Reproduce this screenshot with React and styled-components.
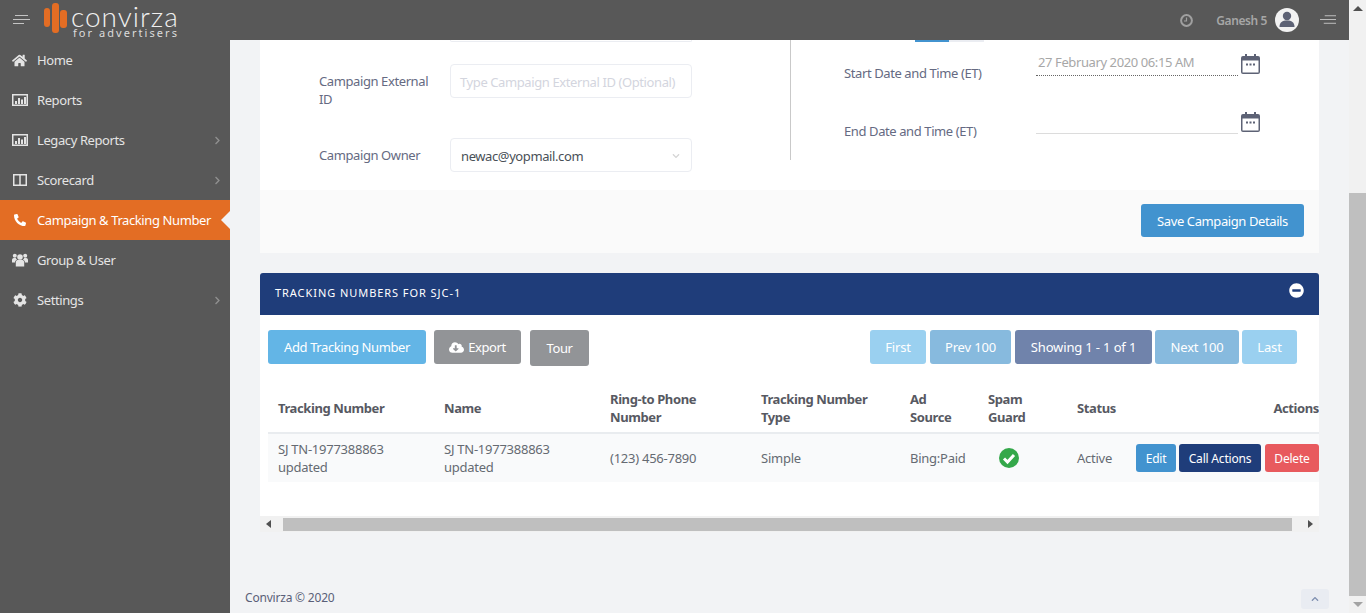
import React from 'react';
import styled, { createGlobalStyle } from 'styled-components';
import {
  FaHome, FaPhoneAlt, FaCog, FaChevronRight, FaChevronUp, FaChevronDown,
  FaCloudDownloadAlt, FaMinusCircle,
} from 'react-icons/fa';

const GlobalStyle = createGlobalStyle`
  html, body, #root { margin: 0; height: 100%; overflow: hidden; }
  body { font-family: "Noto Sans", "Open Sans", sans-serif; font-size: 13px; letter-spacing: -0.4px; color: #575962; }
  * { box-sizing: border-box; }
`;

const Page = styled.div`
  display: flex;
  height: 613px;
  width: 1366px;
  background: #f2f3f5;
`;

const Viewport = styled.div`
  display: flex;
  flex-direction: column;
  width: 1349px;
`;

const Header = styled.header`
  display: flex;
  align-items: center;
  height: 40px;
  flex: none;
  background: #585858;
  padding: 0 13px;
  color: #a9a9a9;
`;

const Burger = styled.svg`
  width: 17px;
  height: 10px;
  flex: none;
  display: block;
`;

const Logo = styled.div`
  display: flex;
  align-items: flex-start;
  margin-left: 14px;
  height: 40px;
`;

const LogoMark = styled.svg`
  width: 23px;
  height: 30px;
  margin-top: 3px;
  flex: none;
`;

const LogoWords = styled.div`
  margin-left: 4px;
  display: flex;
  flex-direction: column;
  color: #f0f0f0;
`;

const LogoName = styled.span`
  font-family: "Lato", sans-serif;
  font-weight: 300;
  font-size: 28px;
  line-height: 20px;
  margin-top: 6px;
  letter-spacing: 1px;
`;

const LogoTag = styled.span`
  font-family: "Noto Sans", sans-serif;
  font-size: 11px;
  line-height: 10px;
  letter-spacing: 2.05px;
  margin: 2px 0 0 2px;
  color: #dcdcdc;
`;

const HeaderRight = styled.div`
  margin-left: auto;
  display: flex;
  align-items: center;
`;

const ClockIcon = styled.svg`
  width: 13px;
  height: 13px;
  display: block;
`;

const UserName = styled.span`
  font-size: 12px;
  font-weight: 600;
  margin-left: 23px;
  color: #a6a6a6;
`;

const Avatar = styled.svg`
  width: 24px;
  height: 24px;
  margin-left: 8px;
`;

const RightBurger = styled(Burger)`
  margin-left: 21px;
  width: 16px;
`;

const Body = styled.div`
  flex: 1;
  display: flex;
  min-height: 0;
`;

const Sidebar = styled.nav`
  width: 230px;
  flex: none;
  background: #585858;
`;

const NavItem = styled.a`
  position: relative;
  display: flex;
  align-items: center;
  height: 40px;
  padding: 0 8px 0 12px;
  color: ${({ $active }) => ($active ? '#ffffff' : '#e4e4e4')};
  background: ${({ $active }) => ($active ? '#e36d24' : 'transparent')};
  font-size: 13px;

  ${({ $active }) => $active && `
    &::after {
      content: '';
      position: absolute;
      right: 0;
      top: 50%;
      margin-top: -9px;
      border-style: solid;
      border-width: 9px 9px 9px 0;
      border-color: transparent #f2f3f5 transparent transparent;
    }
  `}
`;

const NavIcon = styled.span`
  width: 25px;
  flex: none;
  display: flex;
  align-items: center;
  font-size: 15px;
`;

const NavSvg = styled.svg`
  width: 16px;
  height: 14px;
  display: block;
`;

const NavArrow = styled(FaChevronRight)`
  margin-left: auto;
  font-size: 9px;
  color: #8f8f8f;
`;

const Main = styled.main`
  flex: 1;
  display: flex;
  flex-direction: column;
  padding: 0 30px 0 30px;
  min-width: 0;
`;

const Card = styled.section`
  background: #fff;
  flex: none;
`;

const FormArea = styled.div`
  display: flex;
  height: 150px;
`;

const FormLeft = styled.div`
  width: 531px;
  flex: none;
  height: 120px;
  border-right: 1px solid #c9c9c9;
  padding-left: 59px;
`;

const Stub = styled.div`
  width: 242px;
  height: 2px;
  margin-left: 131px;
  border: 1px solid #ebedf2;
  border-top: 0;
  border-radius: 0 0 4px 4px;
`;

const FieldRow = styled.div`
  display: grid;
  grid-template-columns: 131px 242px;
  align-items: start;
  margin-top: ${({ $gap }) => $gap}px;
`;

const FieldLabel = styled.label`
  font-size: 13px;
  line-height: 18px;
  color: #656a82;
  padding: 8px 16px 0 0;
`;

const TextBox = styled.div`
  height: 34px;
  border: 1px solid #ebedf2;
  border-radius: 4px;
  display: flex;
  align-items: center;
  justify-content: space-between;
  padding: 2px 10px 0 ${({ $muted }) => ($muted ? 9 : 10)}px;
  font-size: 13px;
  color: ${({ $muted }) => ($muted ? '#d3d5de' : '#495057')};
  white-space: nowrap;
`;

const SelectCaret = styled(FaChevronDown)`
  font-size: 8px;
  color: #d5d5d5;
  margin-right: 1px;
`;

const FormRight = styled.div`
  flex: 1;
  padding-left: 53px;
`;

const ToggleStub = styled.div`
  display: flex;
  margin-left: 71px;
  height: 2px;
`;

const ToggleBit = styled.div`
  width: ${({ $w }) => $w}px;
  background: ${({ $on }) => ($on ? '#4293cf' : '#ebedf2')};
`;

const DateRow = styled.div`
  display: grid;
  grid-template-columns: 192px 202px 21px;
  align-items: start;
  margin-top: ${({ $gap }) => $gap}px;
`;

const DateLabel = styled(FieldLabel)`
  padding: 14px 0 0;
  white-space: nowrap;
`;

const DateValue = styled.div`
  height: 26px;
  padding: 3px 2px 0;
  font-size: 13px;
  line-height: 18px;
  color: #a7a7a7;
  border-bottom: 1px ${({ $dotted }) => ($dotted ? 'dotted #666' : 'solid #dcdcdc')};
  white-space: nowrap;
`;

const CalendarIcon = styled.svg`
  width: 19px;
  height: 20px;
  margin: 4px 0 0 3px;
`;

const CardFooter = styled.div`
  display: flex;
  justify-content: flex-end;
  align-items: center;
  height: 63px;
  padding: 0 15px 2px 0;
  background: #fafafa;
`;

const Button = styled.button`
  height: ${({ $h }) => $h || 34}px;
  width: ${({ $w }) => $w}px;
  margin-left: ${({ $ml }) => $ml || 0}px;
  flex: none;
  display: inline-flex;
  align-items: center;
  justify-content: center;
  gap: 4px;
  padding: 0;
  border: 0;
  border-radius: 3px;
  background: ${({ $bg }) => $bg};
  color: #fff;
  font-family: inherit;
  letter-spacing: inherit;
  font-size: ${({ $small }) => ($small ? 12 : 13)}px;
  white-space: nowrap;
`;

const PanelHead = styled.div`
  margin-top: 20px;
  flex: none;
  height: 42px;
  display: flex;
  align-items: center;
  justify-content: space-between;
  padding: 0 15px 4px;
  background: #1f3d7a;
  color: #fff;
  border-radius: 3px 3px 0 0;
  font-size: 11px;
  letter-spacing: 0.94px;
`;

const CollapseIcon = styled(FaMinusCircle)`
  font-size: 15px;
  margin-bottom: 4px;
`;

const PanelBody = styled.div`
  height: 201px;
  flex: none;
  background: #fff;
  padding: 15px 0 0 8px;
  overflow: hidden;
`;

const Toolbar = styled.div`
  display: flex;
  align-items: flex-start;
  height: 36px;
  gap: 8px;
  padding-right: 22px;
`;

const Pager = styled.div`
  margin-left: auto;
  display: flex;
  gap: 3px;
  letter-spacing: -0.15px;
`;

const Table = styled.div`
  margin-top: 19px;
  width: 1051px;
`;

const Row = styled.div`
  display: grid;
  grid-template-columns: 166px 166px 151px 149px 78px 89px 59px 193px;
  align-items: center;
  height: ${({ $h }) => $h}px;
  background: ${({ $head }) => ($head ? '#fff' : '#f9fafb')};
  border-bottom: ${({ $head }) => ($head ? '2px solid #e9ecef' : '0')};
  padding-bottom: ${({ $head }) => ($head ? 2 : 0)}px;
`;

const HeadCell = styled.div`
  padding: 0 ${({ $pr }) => $pr || 0}px 0 10px;
  font-weight: 700;
  line-height: 18px;
  color: #575962;
  ${({ $narrow }) => $narrow && 'width: min-content;'}
  ${({ $right }) => $right && 'padding: 0; margin-left: -10px; text-align: right;'}
`;

const Cell = styled.div`
  padding-left: 10px;
  line-height: 18px;
  letter-spacing: -0.25px;
  color: #656a72;
`;

const Actions = styled.div`
  display: flex;
  gap: 3px;
  padding-left: 10px;
  letter-spacing: -0.2px;
`;

const CheckIcon = styled.svg`
  width: 20px;
  height: 20px;
  display: block;
  margin-left: 21px;
`;

const HScroll = styled.div`
  flex: none;
  height: 16px;
  display: flex;
  align-items: center;
  background: #f1f1f1;
`;

const ArrowBox = styled.div`
  width: ${({ $w }) => $w}px;
  padding: ${({ $pad }) => $pad};
  display: flex;
  justify-content: center;
  flex: none;
`;

const Arrow = styled.span`
  width: 0;
  height: 0;
  border-style: solid;
  border-color: transparent;
  ${({ $dir }) => ({
    left: 'border-width: 4px 5px 4px 0; border-right-color: #505050;',
    right: 'border-width: 4px 0 4px 5px; border-left-color: #505050;',
    up: 'border-width: 0 5px 5px 5px; border-bottom-color: #505050;',
    down: 'border-width: 5px 5px 0 5px; border-top-color: #a3a3a3;',
  }[$dir])}
`;

const HThumb = styled.div`
  flex: 1;
  height: 13px;
  margin-top: 1px;
  background: #bfbfbf;
`;

const Footer = styled.footer`
  flex: 1;
  display: flex;
  align-items: flex-end;
  justify-content: space-between;
  margin: 0 0 0 -15px;
  padding-bottom: 7px;
  font-size: 12px;
  letter-spacing: -0.2px;
  color: #5a5f78;
`;

const TopButton = styled.div`
  width: 28px;
  height: 20px;
  margin: 0 -10px -3px 0;
  background: #e9ecf2;
  border-radius: 3px;
  display: flex;
  align-items: center;
  justify-content: center;
  color: #7e8fb0;
  font-size: 8px;
`;

const VScroll = styled.div`
  width: 17px;
  flex: none;
  display: flex;
  flex-direction: column;
  background: #f1f1f1;
`;

const VArrow = styled.div`
  height: 17px;
  flex: none;
  display: flex;
  align-items: center;
  justify-content: center;
`;

const VTrack = styled.div`
  flex: 1;
  display: flex;
  flex-direction: column;
  padding-top: 176px;
`;

const VThumb = styled.div`
  flex: 1;
  background: #bfbfbf;
`;

const BurgerLines = ({ flip }) => (
  <svg viewBox="0 0 17 10" width="100%" height="100%" stroke="#c4c4c4" strokeWidth="1">
    <path d={flip ? 'M5 .5h12M0 4.500h17M4 8.500h13' : 'M2 .5h13M0 4.500h17M0 8.500h11'} />
  </svg>
);

const Calendar = () => (
  <CalendarIcon viewBox="0 0 19 20">
    <path fill="#5d6275" d="M4 0h2v2h7V0h2v2h2a2 2 0 0 1 2 2v14a2 2 0 0 1-2 2H2a2 2 0 0 1-2-2V4a2 2 0 0 1 2-2h2z" />
    <rect fill="#fff" x="1.5" y="6.5" width="16" height="12" />
    <path fill="#5d6275" d="M5 9.500h2v2H5zM8.500 9.500h2v2h-2zM12 9.500h2v2h-2z" />
  </CalendarIcon>
);

const ChartIcon = () => (
  <NavSvg viewBox="0 0 16 14">
    <rect x=".75" y="1.750" width="14.500" height="10.500" fill="none" stroke="currentColor" strokeWidth="1.500" />
    <path fill="currentColor" d="M3 8h2v3H3zM6 5h2v6H6zM9 6.500h2V11H9zM12 4h2v7h-2z" />
  </NavSvg>
);

const ColumnsIcon = () => (
  <NavSvg viewBox="0 0 16 14">
    <rect x="1.750" y="1.750" width="12.500" height="10.500" fill="none" stroke="currentColor" strokeWidth="1.500" />
    <path stroke="currentColor" strokeWidth="1.500" d="M8 2v10" />
  </NavSvg>
);

const UsersIcon = () => (
  <NavSvg viewBox="0 0 16 14">
    <g fill="currentColor">
      <circle cx="8" cy="4" r="2.800" />
      <path d="M3.800 13.500V9.500c0-1.800 1.400-2.700 2.400-2.700h3.600c1 0 2.400.9 2.400 2.700v4z" />
      <circle cx="2.800" cy="2.800" r="2" />
      <circle cx="13.200" cy="2.800" r="2" />
      <path d="M0 9.500V7c0-1.300.9-2 1.800-2h2c.3.800.8 1.400 1.300 1.700-1.300.5-2.100 1.500-2.100 2.800zM16 9.500V7c0-1.300-.9-2-1.800-2h-2c-.3.800-.8 1.400-1.300 1.700 1.300.5 2.100 1.500 2.100 2.800z" />
    </g>
  </NavSvg>
);

const navItems = [
  { label: 'Home', icon: <FaHome /> },
  { label: 'Reports', icon: <ChartIcon /> },
  { label: 'Legacy Reports', icon: <ChartIcon />, arrow: true },
  { label: 'Scorecard', icon: <ColumnsIcon />, arrow: true },
  { label: 'Campaign & Tracking Number', icon: <FaPhoneAlt style={{ fontSize: 12, marginLeft: 2 }} />, active: true },
  { label: 'Group & User', icon: <UsersIcon /> },
  { label: 'Settings', icon: <FaCog style={{ fontSize: 14, marginLeft: 1 }} />, arrow: true },
];

const App = () => (
  <Page>
    <GlobalStyle />
    <Viewport>
      <Header>
        <Burger><BurgerLines /></Burger>
        <Logo>
          <LogoMark viewBox="0 0 23 30">
            <g fill="#e36d24">
              <rect x="0" y="5" width="6" height="19" rx="3" />
              <rect x="8" y="0" width="7" height="30" rx="3" />
              <rect x="16" y="7" width="7" height="18" rx="3" />
            </g>
          </LogoMark>
          <LogoWords>
            <LogoName>convirza</LogoName>
            <LogoTag>for advertisers</LogoTag>
          </LogoWords>
        </Logo>
        <HeaderRight>
          <ClockIcon viewBox="0 0 13 13">
            <circle cx="6.500" cy="6.500" r="5.400" fill="none" stroke="#a0a0a0" strokeWidth="2" />
            <path d="M6.500 3.500v3.500H4" fill="none" stroke="#a0a0a0" strokeWidth="1.200" />
          </ClockIcon>
          <UserName>Ganesh 5</UserName>
          <Avatar viewBox="0 0 24 24">
            <circle cx="12" cy="12" r="12" fill="#f2f2f2" />
            <circle cx="12" cy="8" r="4.200" fill="#5d6275" />
            <path fill="#5d6275" d="M4.500 19c0-5 3-6.500 7.500-6.500s7.500 1.500 7.500 6.500z" />
          </Avatar>
          <RightBurger><BurgerLines flip /></RightBurger>
        </HeaderRight>
      </Header>
      <Body>
        <Sidebar>
          {navItems.map((item) => (
            <NavItem key={item.label} $active={item.active}>
              <NavIcon>{item.icon}</NavIcon>
              {item.label}
              {item.arrow && <NavArrow />}
            </NavItem>
          ))}
        </Sidebar>
        <Main>
          <Card>
            <FormArea>
              <FormLeft>
                <Stub />
                <FieldRow $gap={22}>
                  <FieldLabel>Campaign External ID</FieldLabel>
                  <TextBox $muted>Type Campaign External ID (Optional)</TextBox>
                </FieldRow>
                <FieldRow $gap={30}>
                  <FieldLabel>Campaign Owner</FieldLabel>
                  <TextBox>
                    newac@yopmail.com
                    <SelectCaret />
                  </TextBox>
                </FieldRow>
              </FormLeft>
              <FormRight>
                <ToggleStub>
                  <ToggleBit $on $w={34} />
                  <ToggleBit $w={35} />
                </ToggleStub>
                <DateRow $gap={8}>
                  <DateLabel>Start Date and Time (ET)</DateLabel>
                  <DateValue $dotted>27 February 2020 06:15 AM</DateValue>
                  <Calendar />
                </DateRow>
                <DateRow $gap={26}>
                  <DateLabel>End Date and Time (ET)</DateLabel>
                  <DateValue />
                  <Calendar />
                </DateRow>
              </FormRight>
            </FormArea>
            <CardFooter>
              <Button $w={163} $h={33} $bg="#4293cf">Save Campaign Details</Button>
            </CardFooter>
          </Card>

          <PanelHead>
            TRACKING NUMBERS FOR SJC-1
            <CollapseIcon />
          </PanelHead>
          <PanelBody>
            <Toolbar>
              <Button $w={158} $bg="#63b5e6">Add Tracking Number</Button>
              <Button $w={87} $bg="#929497"><FaCloudDownloadAlt size={15} /> Export</Button>
              <Button $w={59} $h={36} $ml={1} $bg="#929497">Tour</Button>
              <Pager>
                <Button $w={56} $bg="#9ad0f0">First</Button>
                <Button $w={81} $ml={1} $bg="#87bade">Prev 100</Button>
                <Button $w={137} $ml={1} $bg="#7083ab">Showing 1 - 1 of 1</Button>
                <Button $w={84} $bg="#87bade">Next 100</Button>
                <Button $w={55} $bg="#9ad0f0">Last</Button>
              </Pager>
            </Toolbar>
            <Table>
              <Row $head $h={49}>
                <HeadCell>Tracking Number</HeadCell>
                <HeadCell>Name</HeadCell>
                <HeadCell $pr={30}>Ring-to Phone Number</HeadCell>
                <HeadCell $pr={20}>Tracking Number Type</HeadCell>
                <HeadCell $narrow>Ad Source</HeadCell>
                <HeadCell $narrow>Spam Guard</HeadCell>
                <HeadCell>Status</HeadCell>
                <HeadCell $right>Actions</HeadCell>
              </Row>
              <Row $h={48}>
                <Cell>SJ TN-1977388863 updated</Cell>
                <Cell>SJ TN-1977388863 updated</Cell>
                <Cell>(123) 456-7890</Cell>
                <Cell>Simple</Cell>
                <Cell>Bing:Paid</Cell>
                <div>
                  <CheckIcon viewBox="0 0 20 20">
                    <circle cx="10" cy="10" r="10" fill="#34a84a" />
                    <path d="M5 10.500l3.500 3.500 6.500-7" fill="none" stroke="#fff" strokeWidth="3" />
                  </CheckIcon>
                </div>
                <Cell>Active</Cell>
                <Actions>
                  <Button $small $w={40} $h={28} $bg="#4293cf">Edit</Button>
                  <Button $small $w={82} $h={28} $bg="#1f3d7a">Call Actions</Button>
                  <Button $small $w={54} $h={28} $ml={1} $bg="#e85a5e">Delete</Button>
                </Actions>
              </Row>
            </Table>
          </PanelBody>
          <HScroll>
            <ArrowBox $w={23} $pad="0 7px 0 0"><Arrow $dir="left" /></ArrowBox>
            <HThumb />
            <ArrowBox $w={27} $pad="0 0 0 9px"><Arrow $dir="right" /></ArrowBox>
          </HScroll>
          <Footer>
            Convirza © 2020
            <TopButton><FaChevronUp /></TopButton>
          </Footer>
        </Main>
      </Body>
    </Viewport>
    <VScroll>
      <VArrow><Arrow $dir="up" /></VArrow>
      <VTrack><VThumb /></VTrack>
      <VArrow><Arrow $dir="down" /></VArrow>
    </VScroll>
  </Page>
);

export default App;
